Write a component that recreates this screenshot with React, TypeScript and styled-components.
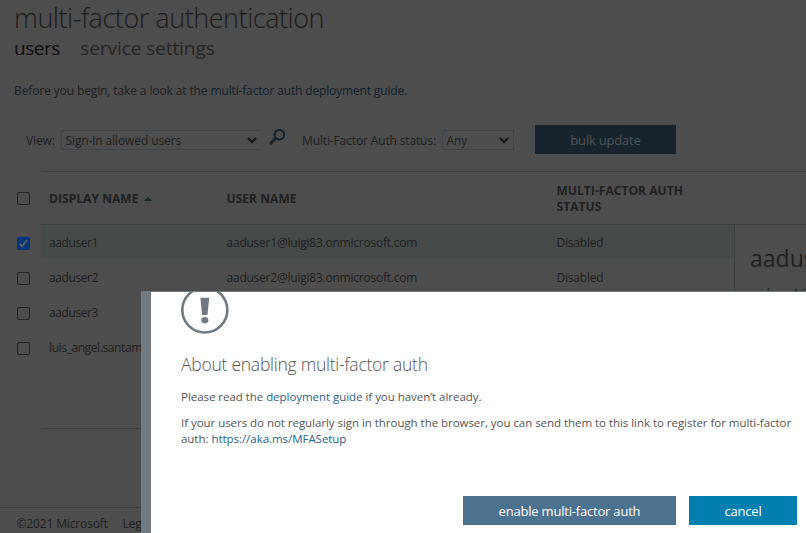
import React from "react";
import styled, { createGlobalStyle, css } from "styled-components";

const GlobalStyle = createGlobalStyle`
  * { box-sizing: border-box; }
  html, body { margin: 0; padding: 0; overflow: hidden; background: #4d4d4d; }
  body { font-family: "Open Sans", "Noto Sans", sans-serif; font-size: 12px; color: #202020; }
  h1, h2, p { margin: 0; font-weight: 400; }
`;

const Page = styled.main`
  position: relative;
  width: 806px;
  height: 533px;
  overflow: hidden;
  background: #4d4d4d;
  display: flex;
  flex-direction: column;
  white-space: nowrap;
`;

const Text = styled.span<{ $track?: number }>`
  letter-spacing: ${(p) => p.$track ?? 0}px;
  white-space: pre;
`;

const Title = styled.h1`
  height: 36px;
  padding-left: 14px;
  font-size: 27px;
  font-weight: 300;
  line-height: 36px;
  letter-spacing: -0.46px;
  color: #1c1c1c;
`;

const Tabs = styled.nav`
  display: flex;
  gap: 20.5px;
  height: 24px;
  padding-left: 14px;
  font-size: 19px;
  line-height: 24px;
`;

const Tab = styled.span<{ $active?: boolean }>`
  letter-spacing: ${(p) => (p.$active ? -0.5 : -0.07)}px;
  color: ${(p) => (p.$active ? "#0c0c0c" : "#252525")};
`;

const Intro = styled.p`
  margin-top: 21px;
  height: 20px;
  padding-left: 14px;
  line-height: 20px;
`;

const DimLink = styled.a`
  letter-spacing: -0.15px;
  color: #10202c;
`;

const Toolbar = styled.div`
  display: flex;
  align-items: center;
  height: 30px;
  margin-top: 24px;
  padding-left: 26px;
`;

const Label = styled.label<{ $width: number }>`
  flex: none;
  width: ${(p) => p.$width}px;
  padding-top: 1px;
  letter-spacing: -0.14px;
`;

const Select = styled.div<{ $width: number; $clipped?: boolean }>`
  flex: none;
  display: flex;
  align-items: center;
  justify-content: space-between;
  width: ${(p) => p.$width}px;
  height: 20px;
  padding: 1px 4px 0 3.5px;
  letter-spacing: -0.1px;
  border: 1px solid #3b444b;
  ${(p) => p.$clipped && css`border-right: 0; padding-right: 3px;`}
`;

const SearchIcon = styled.svg`
  flex: none;
  margin: -7px 15px 0 8px;
`;

const Button = styled.button<{ $width: number; $bg: string; $fg?: string }>`
  flex: none;
  width: ${(p) => p.$width}px;
  height: 29px;
  padding: 1px 0 0;
  border: 0;
  background: ${(p) => p.$bg};
  color: ${(p) => p.$fg ?? "#fff"};
  font-family: inherit;
  font-size: 13px;
  line-height: 28px;
  letter-spacing: -0.2px;
`;

const BulkButton = styled(Button)`
  margin: -1px 0 0 21px;
`;

const Table = styled.section`
  display: grid;
  grid-template-columns: 41px 1fr;
  margin-top: 16px;
  height: 258px;
`;

const Checks = styled.div`
  display: flex;
  flex-direction: column;
  padding: 21px 0 0 17px;
  gap: 22px;
`;

const Box = styled.span<{ $checked?: boolean; $first?: boolean }>`
  display: flex;
  flex: none;
  width: 13px;
  height: 13px;
  margin-top: ${(p) => (p.$first ? 10 : 0)}px;
  border-radius: 2px;
  border: 1px solid ${(p) => (p.$checked ? "#00367a" : "#232323")};
  background: ${(p) => (p.$checked ? "#00367a" : "transparent")};
`;

const Grid = styled.div`
  border-top: 1px solid #3e3f3f;
  border-bottom: 1px solid #3e3f3f;
`;

const columns = css`
  display: grid;
  grid-template-columns: 177.5px 330px 1fr;
  align-items: center;
  padding-left: 8px;
`;

const HeadRow = styled.div`
  ${columns}
  height: 53px;
  padding-top: 2px;
  border-bottom: 1px solid #3c3f3f;
  font-weight: 700;
  line-height: 16px;
  letter-spacing: 0.06px;
`;

const HeadCell = styled.span`
  display: flex;
  align-items: center;
  gap: 6px;
`;

const Body = styled.div`
  display: grid;
  grid-template-columns: 693px 1fr;
  height: 203px;
`;

const Row = styled.div<{ $selected?: boolean }>`
  ${columns}
  height: 35px;
  padding-top: 1px;
  border-bottom: 1px solid #4d4d4d;
  background: ${(p) => (p.$selected ? "#464a49" : "transparent")};
`;

const Details = styled.aside`
  border-left: 1px solid #3c3f3f;
  padding: 16px 0 0 15px;
`;

const DetailsName = styled.h2`
  font-size: 23px;
  line-height: 34px;
`;

const DetailsSub = styled.p`
  margin-top: 11px;
  line-height: 16px;
  letter-spacing: -0.38px;
`;

const Footer = styled.footer`
  display: flex;
  gap: 14.5px;
  margin-top: 78px;
  padding: 7px 0 0 16.5px;
  border-top: 1px solid #3e3f3f;
  line-height: 18px;
  letter-spacing: -0.14px;
`;

const Dialog = styled.div`
  position: absolute;
  left: 141px;
  top: 291px;
  width: 665px;
  height: 242px;
  display: flex;
  flex-direction: column;
  padding-left: 30px;
  overflow: hidden;
  background: #fff;
  border-top: 1px solid #717a82;
  border-left: 10px solid #717a82;
  color: #555;
`;

const AlertIcon = styled.svg`
  flex: none;
  margin-top: -6px;
`;

const DialogTitle = styled.h2`
  margin-top: 16px;
  font-size: 17.5px;
  font-weight: 300;
  line-height: 28px;
  letter-spacing: -0.25px;
`;

const DialogText = styled.p<{ $top: number }>`
  margin-top: ${(p) => p.$top}px;
  font-size: 11.5px;
  line-height: 16px;
  letter-spacing: -0.04px;
`;

const Link = styled.a`
  color: #1f6391;
`;

const Actions = styled.div`
  display: flex;
  justify-content: flex-end;
  gap: 13px;
  margin-top: 49px;
  padding-right: 9px;
`;

const Chevron = () => (
  <svg width="10" height="7" viewBox="0 0 10 7" fill="none">
    <path d="M1 1l4 4 4-4" stroke="#161616" strokeWidth="2" />
  </svg>
);

const users = [
  { name: "aaduser1", mail: "aaduser1@luigi83.onmicrosoft.com", selected: true },
  { name: "aaduser2", mail: "aaduser2@luigi83.onmicrosoft.com" },
  { name: "aaduser3", mail: "" },
  { name: "luis_angel.santam", mail: "" },
];

export default function App() {
  return (
    <Page>
      <GlobalStyle />
      <Title>multi-factor authentication</Title>
      <Tabs>
        <Tab $active>users</Tab>
        <Tab>service settings</Tab>
      </Tabs>
      <Intro>
        <Text $track={-0.116}>Before you begin, take a look at the </Text>
        <DimLink>multi-factor auth deployment guide</DimLink>.
      </Intro>
      <Toolbar>
        <Label $width={35}>View:</Label>
        <Select $width={199} $clipped>Sign-in allowed users<Chevron /></Select>
        <SearchIcon width="18" height="18" viewBox="0 0 18 18" fill="none" stroke="#14212b">
          <circle cx="11.3" cy="6.7" r="4.8" strokeWidth="2" />
          <path d="M7.6 10.4L2 16" strokeWidth="2.8" />
        </SearchIcon>
        <Label $width={141}>&#8202;Multi-Factor Auth status:</Label>
        <Select $width={72}>Any<Chevron /></Select>
        <BulkButton $width={141} $bg="#17242d" $fg="#4f5558">bulk update</BulkButton>
      </Toolbar>
      <Table>
        <Checks>
          <Box />
          {users.map((u, i) => (
            <Box key={u.name} $checked={u.selected} $first={i === 0}>
              {u.selected && (
                <svg width="11" height="11" viewBox="0 0 11 11" fill="none">
                  <path d="M1.6 5.8l2.5 2.5 5-6.3" stroke="#5a5a5a" strokeWidth="2" />
                </svg>
              )}
            </Box>
          ))}
        </Checks>
        <Grid>
          <HeadRow>
            <HeadCell>
              DISPLAY NAME
              <svg width="8" height="4" viewBox="0 0 8 4"><path d="M0 4L4 0l4 4z" fill="#15252c" /></svg>
            </HeadCell>
            <HeadCell>USER NAME</HeadCell>
            <span>MULTI-FACTOR AUTH<br />STATUS</span>
          </HeadRow>
          <Body>
            <div>
              {users.map((u) => (
                <Row key={u.name} $selected={u.selected}>
                  <Text $track={-0.4}>{u.name}</Text>
                  <Text $track={-0.23}>{u.mail}</Text>
                  <Text $track={-0.2}>{u.mail && "Disabled"}</Text>
                </Row>
              ))}
            </div>
            <Details>
              <DetailsName>aaduser1</DetailsName>
              <DetailsSub>aaduser1@luigi83.onmicrosoft.com</DetailsSub>
            </Details>
          </Body>
        </Grid>
      </Table>
      <Footer><span>©2021 Microsoft</span><span>Legal</span></Footer>
      <Dialog>
        <AlertIcon width="48" height="48" viewBox="0 0 48 48">
          <circle cx="23.8" cy="24" r="22.5" fill="none" stroke="#717a82" strokeWidth="2.6" />
          <path d="M19.4 11.7h8.8l-1.7 17.3h-5.4z" fill="#717a82" />
          <ellipse cx="23.8" cy="34.2" rx="3.5" ry="3.1" fill="#717a82" />
        </AlertIcon>
        <DialogTitle>About enabling multi-factor auth</DialogTitle>
        <DialogText $top={11}>
          Please read the <Link>deployment guide</Link> if you haven’t already.
        </DialogText>
        <DialogText $top={10}>
          If your users do not regularly sign in through the browser, you can send them to this link to register for multi-factor
          <br />
          auth: <Link>https://aka.ms/MFASetup</Link>
        </DialogText>
        <Actions>
          <Button $width={213} $bg="#4d7290">enable multi-factor auth</Button>
          <Button $width={108} $bg="#007fb0">cancel</Button>
        </Actions>
      </Dialog>
    </Page>
  );
}
